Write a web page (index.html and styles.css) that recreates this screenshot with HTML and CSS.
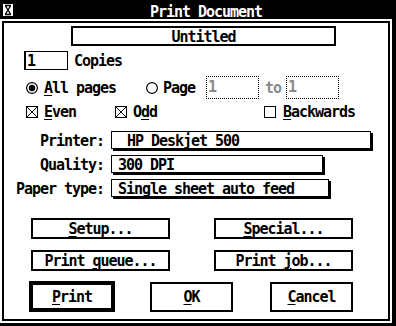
FILE: index.html
```html
<!DOCTYPE html>
<html lang="en">

<head>
    <meta charset="UTF-8">
    <meta name="viewport" content="width=device-width, initial-scale=1.0">
    <title>Print Document</title>
    <link rel="stylesheet" href="styles.css">
</head>

<body>
    <div class="window">
        <div class="titlebar">
            <div class="closer">
                <svg width="10" height="12" viewBox="0 0 10 12">
                    <rect x="0" y="0" width="10" height="12" fill="#fff" />
                    <path d="M2 1.5H8M2 10.5H8M2.5 2L7.5 10M7.5 2L2.5 10" stroke="#000" stroke-width="1.4" fill="none" />
                </svg>
            </div>
            <div class="title">Print Document</div>
        </div>

        <div class="frame">
            <div class="dialog">
                <div class="row name-row">
                    <div class="doc-name">Untitled</div>
                </div>

                <div class="row copies-row">
                    <div class="copies-field">1</div>
                    <span class="copies-label">Copies</span>
                </div>

                <div class="row pages-row">
                    <svg class="radio radio-all" width="12" height="12" viewBox="0 0 12 12">
                        <circle cx="6" cy="6" r="5.4" fill="#fff" stroke="#000" stroke-width="1.2" />
                        <circle cx="6" cy="6" r="3.2" fill="#000" />
                    </svg>
                    <span class="opt-label"><u>A</u>ll pages</span>
                    <svg class="radio radio-page" width="12" height="12" viewBox="0 0 12 12">
                        <circle cx="6" cy="6" r="5.4" fill="#fff" stroke="#000" stroke-width="1.2" />
                    </svg>
                    <span class="page-label">Page</span>
                    <div class="range-box from-box">1</div>
                    <span class="range-to">to</span>
                    <div class="range-box to-box">1</div>
                </div>

                <div class="row check-row">
                    <svg class="check check-even" width="12" height="12" viewBox="0 0 12 12">
                        <rect x="0.5" y="0.5" width="11" height="11" fill="#fff" stroke="#000" />
                        <path d="M1 1L11 11M11 1L1 11" stroke="#000" />
                    </svg>
                    <span class="opt-label"><u>E</u>ven</span>
                    <svg class="check check-odd" width="12" height="12" viewBox="0 0 12 12">
                        <rect x="0.5" y="0.5" width="11" height="11" fill="#fff" stroke="#000" />
                        <path d="M1 1L11 11M11 1L1 11" stroke="#000" />
                    </svg>
                    <span class="opt-label">O<u>d</u>d</span>
                    <svg class="check check-back" width="12" height="12" viewBox="0 0 12 12">
                        <rect x="0.5" y="0.5" width="11" height="11" fill="#fff" stroke="#000" />
                    </svg>
                    <span class="back-label"><u>B</u>ackwards</span>
                </div>

                <div class="row popup-row printer-row">
                    <span class="popup-label">Printer:</span>
                    <div class="popup printer-popup">HP Deskjet 500</div>
                </div>
                <div class="row popup-row quality-row">
                    <span class="popup-label">Quality:</span>
                    <div class="popup quality-popup">300 DPI</div>
                </div>
                <div class="row popup-row paper-row">
                    <span class="popup-label">Paper type:</span>
                    <div class="popup paper-popup">Single sheet auto feed</div>
                </div>

                <div class="row btn-row first-btn-row">
                    <div class="btn wide-btn"><span><u>S</u>etup...</span></div>
                    <div class="btn wide-btn"><span><u>S</u>pecial...</span></div>
                </div>
                <div class="row btn-row second-btn-row">
                    <div class="btn wide-btn"><span>Print <u>q</u>ueue...</span></div>
                    <div class="btn wide-btn"><span>Print <u>j</u>ob...</span></div>
                </div>

                <div class="row exit-row">
                    <div class="btn exit-btn default-btn"><span><u>P</u>rint</span></div>
                    <div class="btn exit-btn ok-btn"><span><u>O</u>K</span></div>
                    <div class="btn exit-btn cancel-btn"><span><u>C</u>ancel</span></div>
                </div>
            </div>
        </div>
    </div>
</body>

</html>
```

FILE: styles.css
```css
* {
    box-sizing: border-box;
}

body {
    margin: 0;
    background: #fff;
    color: #000;
    font-family: "DejaVu Sans Mono", monospace;
    font-weight: bold;
    font-size: 15px;
    line-height: 16px;
    letter-spacing: -1.03px;
    overflow: hidden;
}

u {
    text-decoration-thickness: 1px;
    text-underline-offset: 2px;
}

.window {
    width: 396px;
    height: 326px;
    display: flex;
    flex-direction: column;
}

/* title bar */
.titlebar {
    height: 19px;
    background: #000;
    color: #fff;
    display: flex;
}

.closer {
    width: 16px;
    padding: 4px 0 0 3px;
}

.closer svg {
    display: block;
}

.title {
    flex: 1;
    text-align: center;
    padding-top: 4px;
}

/* window frame with drop shadow */
.frame {
    flex: 1;
    border-right: 4px solid #000;
    border-bottom: 3px solid #000;
    padding: 2px;
}

.dialog {
    height: 100%;
    border: 2px solid #000;
}

.row {
    display: flex;
    align-items: center;
}

/* document name */
.name-row {
    margin-top: 3px;
}

.doc-name {
    margin-left: 67px;
    width: 265px;
    height: 20px;
    border: 2px solid #000;
    padding-top: 1px;
    text-align: center;
}

/* copies */
.copies-row {
    margin-top: 5px;
}

.copies-field {
    margin-left: 20px;
    width: 44px;
    height: 19px;
    border: 1px solid #000;
    border-left-width: 2px;
    padding-left: 1px;
    line-height: 18px;
}

.copies-label {
    margin-left: 6px;
    padding-top: 1px;
}

/* page range */
.pages-row {
    margin-top: 6px;
    height: 23px;
}

.radio, .check {
    flex: none;
    display: block;
}

.radio-all, .check-even {
    margin-left: 22px;
}

.opt-label {
    margin-left: 6px;
}

.radio-page {
    margin-left: 30px;
}

.page-label {
    margin-left: 5px;
}

.range-box {
    width: 53px;
    height: 23px;
    border: 1px dotted #000;
    padding-left: 1px;
    line-height: 21px;
    color: #8a8a8a;
}

.from-box {
    margin-left: 11px;
}

.range-to {
    margin-left: 6px;
    color: #8a8a8a;
}

.to-box {
    margin-left: 5px;
}

/* checkboxes */
.check-row {
    margin-top: 5px;
    height: 16px;
}

.check-odd {
    margin-left: 39px;
}

.check-back {
    margin-left: 107px;
}

.back-label {
    margin-left: 7px;
}

/* popups */
.popup-row {
    height: 18px;
}

.printer-row {
    margin-top: 11px;
}

.quality-row, .paper-row {
    margin-top: 6px;
}

.popup-label {
    width: 100px;
    text-align: right;
    padding-top: 1px;
}

.popup {
    margin-left: 7px;
    height: 18px;
    border: 1px solid #000;
    box-shadow: 2px 2px 0 #000;
    padding-left: 6px;
    padding-top: 1px;
}

.printer-popup {
    width: 260px;
    padding-left: 15px;
}

.quality-popup {
    width: 212px;
}

.paper-popup {
    width: 218px;
}

/* buttons */
.btn {
    border: 2px solid #000;
    display: flex;
    align-items: center;
    justify-content: center;
}

.wide-btn {
    width: 139px;
    height: 21px;
}

.wide-btn + .wide-btn {
    margin-left: 44px;
}

.first-btn-row {
    margin-top: 21px;
    padding-left: 27px;
}

.second-btn-row {
    margin-top: 11px;
    padding-left: 27px;
}

.exit-row {
    margin-top: 10px;
    align-items: flex-end;
}

.exit-btn {
    width: 83px;
    height: 30px;
}

.default-btn {
    margin-left: 25px;
    width: 86px;
    height: 31px;
    border-width: 4px;
}

.ok-btn {
    margin-left: 35px;
}

.cancel-btn {
    margin-left: 37px;
}
```
